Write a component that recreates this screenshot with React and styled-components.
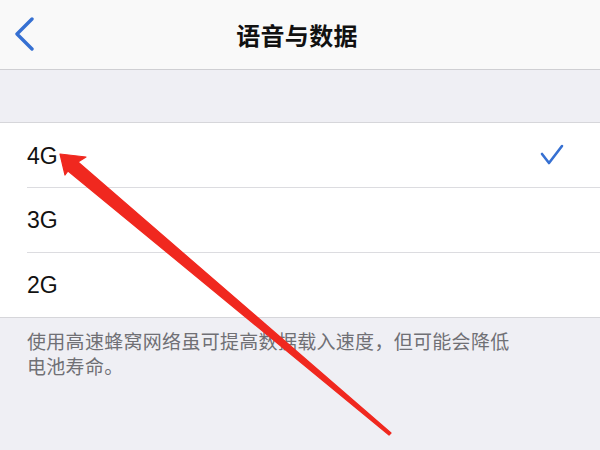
import styled, { createGlobalStyle } from "styled-components";

const GlobalStyle = createGlobalStyle`
    html, body {
        margin: 0;
        padding: 0;
        background: #efeff4;
    }
    * {
        box-sizing: border-box;
    }
`;

const CJK = `"Noto Sans CJK SC", "Noto Sans", sans-serif`;
const LATIN = `"Liberation Sans", "Noto Sans CJK SC", sans-serif`;

const Screen = styled.div`
    position: relative;
    width: 600px;
    height: 450px;
    overflow: hidden;
    background: #efeff4;
    display: flex;
    flex-direction: column;
`;

const NavBar = styled.header`
    height: 70px;
    flex-shrink: 0;
    background: #f9f9f9;
    border-bottom: 1px solid #cfcfd3;
    display: grid;
    grid-template-columns: 1fr auto 1fr;
    align-items: center;
    padding: 0 14px;
`;

const BackButton = styled.button`
    justify-self: start;
    background: none;
    border: 0;
    padding: 0;
    margin-top: -1px;
    display: flex;
    cursor: pointer;
`;

const Title = styled.h1`
    margin: 0 0 0 -6px;
    font-family: ${CJK};
    font-size: 24px;
    font-weight: 700;
    color: #111;
    letter-spacing: 0.3px;
    line-height: 1;
`;

const Gap = styled.div`
    height: 52px;
    flex-shrink: 0;
`;

const List = styled.ul`
    margin: 0;
    padding: 0;
    list-style: none;
    background: #fff;
    border-top: 1px solid #d6d6da;
    border-bottom: 1px solid #d6d6da;
`;

const Row = styled.li`
    height: ${({ $last }) => ($last ? "64px" : "65px")};
    margin-left: 27px;
    padding-right: 36px;
    display: flex;
    align-items: center;
    justify-content: space-between;
    border-bottom: ${({ $last }) => ($last ? "none" : "1px solid #dcdce0")};
`;

const Label = styled.span`
    font-family: ${LATIN};
    font-size: 23px;
    color: #111;
    margin-top: ${({ $shift }) => $shift || 0}px;
`;

const Footer = styled.p`
    margin: 0;
    padding: 10px 27px 0;
    font-family: ${CJK};
    font-size: 19px;
    line-height: 25px;
    letter-spacing: 0.3px;
    color: #707075;
`;

const Annotation = styled.svg`
    position: absolute;
    inset: 0;
    pointer-events: none;
`;

const Chevron = () => (
    <svg width="22" height="34" viewBox="0 0 22 34">
        <polyline
            points="18,2 3,17 18,32"
            fill="none"
            stroke="#3670d2"
            strokeWidth="3.4"
            strokeLinecap="round"
            strokeLinejoin="round"
        />
    </svg>
);

const Check = () => (
    <svg width="24" height="22" viewBox="0 0 24 22">
        <polyline
            points="2,10 9,19 22,2"
            fill="none"
            stroke="#3670d2"
            strokeWidth="2.6"
            strokeLinecap="round"
            strokeLinejoin="round"
        />
    </svg>
);

const options = [
    { id: "4g", name: "4G", selected: true },
    { id: "3g", name: "3G" },
    { id: "2g", name: "2G" },
];

export default function App() {
    return (
        <Screen>
            <GlobalStyle />
            <NavBar>
                <BackButton aria-label="返回">
                    <Chevron />
                </BackButton>
                <Title>语音与数据</Title>
                <span />
            </NavBar>
            <Gap />
            <List>
                {options.map(({ id, name, selected }, i) => (
                    <Row key={id} $last={i === options.length - 1}>
                        <Label $shift={i === 0 ? 3 : 0}>{name}</Label>
                        {selected && <Check />}
                    </Row>
                ))}
            </List>
            <Footer>
                使用高速蜂窝网络虽可提高数据载入速度，但可能会降低
                <br />
                电池寿命。
            </Footer>
            <Annotation width="600" height="450" viewBox="0 0 600 450">
                <polygon
                    points="60,154 86,157 78,162 391,433 389,435 68,171 65,175"
                    fill="#f0281f"
                    stroke="#f0281f"
                    strokeWidth="1.2"
                    strokeLinejoin="round"
                />
            </Annotation>
        </Screen>
    );
}
